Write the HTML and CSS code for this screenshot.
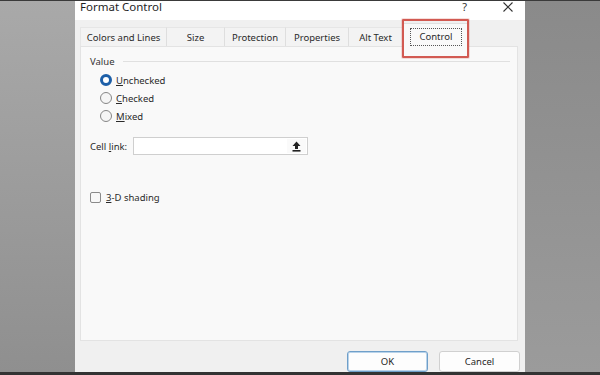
FILE: index.html
```html
<!DOCTYPE html>
<html lang="en">
<head>
<meta charset="utf-8">
<title>Format Control</title>
<link rel="stylesheet" href="styles.css">
</head>
<body>
<div class="screen">
  <div class="side side-left"></div>
  <div class="dialog">
    <div class="titlebar">
      <span class="title">Format Control</span>
      <span class="help">?</span>
      <svg class="close" width="10" height="10" viewBox="0 0 10 10"><path d="M0.5 0.5 L9.5 9.5 M9.5 0.5 L0.5 9.5" stroke="#333" stroke-width="1.1" fill="none"/></svg>
    </div>
    <div class="body">
      <div class="tabs">
        <div class="tab">Colors and Lines</div>
        <div class="tab">Size</div>
        <div class="tab">Protection</div>
        <div class="tab">Properties</div>
        <div class="tab">Alt Text</div>
        <div class="tab tab-active"><span class="focus">Control</span><span class="highlight"></span></div>
      </div>
      <div class="panel">
        <div class="group-head"><span class="group-label">Value</span><span class="group-line"></span></div>
        <div class="radios">
          <label class="radio-row"><span class="radio radio-on"></span><span><u>U</u>nchecked</span></label>
          <label class="radio-row"><span class="radio"></span><span><u>C</u>hecked</span></label>
          <label class="radio-row"><span class="radio"></span><span><u>M</u>ixed</span></label>
        </div>
        <div class="link-row">
          <span class="link-label">Cell <u>l</u>ink:</span>
          <div class="input">
            <span class="input-btn"><svg width="9" height="11" viewBox="0 0 9 11"><path d="M4.5 0.5 L8.5 5 H6 V8 H3 V5 H0.5 Z" fill="#222"/><rect x="0.5" y="9" width="8" height="1.6" fill="#222"/></svg></span>
          </div>
        </div>
        <label class="check-row"><span class="checkbox"></span><span><u>3</u>-D shading</span></label>
      </div>
      <div class="footer">
        <button class="btn btn-default">OK</button>
        <button class="btn">Cancel</button>
      </div>
    </div>
  </div>
  <div class="side side-right"></div>
</div>
</body>
</html>
```
FILE: styles.css
```css
* { box-sizing: border-box; }
html, body { margin: 0; padding: 0; }
body {
  width: 600px;
  height: 375px;
  overflow: hidden;
  background: #2e2e2e;
  font-family: "Segoe UI", "Noto Sans", "Open Sans", sans-serif;
  font-size: 9.5px;
  color: #2a2a2a;
}
.screen {
  display: flex;
  width: 600px;
  height: 375px;
  border-top: 1px solid #3a3a3a;
  border-bottom: 3px solid #333;
}
.side { width: 75px; flex: none; }
.side-left { background: linear-gradient(#a9a9a9, #8f8f8f); }
.side-right { background: linear-gradient(#8a8a8a, #9b9b9b); }
.dialog {
  width: 450px;
  flex: none;
  display: flex;
  flex-direction: column;
  background: #f0f0f0;
}
.titlebar {
  height: 19px;
  background: #fff;
  display: flex;
  align-items: flex-start;
  padding-left: 5px;
}
.title {
  font-size: 11.5px;
  line-height: 12px;
  color: #1f1f1f;
}
.help {
  margin-left: auto;
  font-size: 11px;
  line-height: 12px;
  color: #333;
}
.close { margin: 1px 12px 0 36px; }
.body {
  flex: 1;
  display: flex;
  flex-direction: column;
  padding: 0 7px 0 5px;
}
.tabs {
  display: grid;
  grid-template-columns: 87px 58px 61px 63px 54px 66px;
  height: 26px;
  align-items: end;
  position: relative;
}
.tab {
  height: 19px;
  display: flex;
  align-items: center;
  justify-content: center;
  border-top: 1px solid #e6e6e6;
  border-right: 1px solid #dedede;
  background: #f3f3f3;
  color: #2a2a2a;
}
.tab:first-child { border-left: 1px solid #e6e6e6; }
.tab-active {
  height: 24px;
  background: #f9f9f9;
  border: 1px solid #e0e0e0;
  border-bottom: none;
  margin-bottom: -1px;
  position: relative;
  z-index: 2;
  padding-top: 2px;
}
.focus {
  border: 1px dotted #555;
  padding: 2px 9px;
  line-height: 12px;
}
.highlight {
  position: absolute;
  left: -2px;
  right: -1px;
  top: -5px;
  height: 39px;
  border: 2px solid #d25a52;
  border-radius: 1px;
  box-shadow: 0 0 0 1px rgba(210,90,82,0.2);
}
.panel {
  height: 295px;
  background: #f9f9f9;
  border: 1px solid #e3e3e3;
  padding: 8px 7px 0 9px;
  position: relative;
  z-index: 1;
}
.group-head {
  display: flex;
  align-items: center;
  height: 12px;
}
.group-label { color: #333; }
.group-line {
  flex: 1;
  height: 1px;
  background: #e0e0e0;
  margin-left: 8px;
}
.radios {
  display: flex;
  flex-direction: column;
  gap: 6px;
  padding: 7px 0 0 10px;
}
.radio-row {
  display: flex;
  align-items: center;
  gap: 4px;
  height: 12px;
}
.radio {
  width: 12px;
  height: 12px;
  border-radius: 50%;
  border: 1px solid #868686;
  background: #f5f5f5;
  flex: none;
}
.radio-on {
  border: 3.5px solid #1d5fa8;
  background: #fff;
}
.link-row {
  display: flex;
  align-items: center;
  margin-top: 15px;
  height: 18px;
}
.link-label { width: 43px; color: #2a2a2a; }
.input {
  width: 175px;
  height: 18px;
  background: #fff;
  border: 1px solid #cfcfcf;
  display: flex;
  justify-content: flex-end;
  padding: 1px;
}
.input-btn {
  width: 19px;
  height: 14px;
  display: flex;
  align-items: center;
  justify-content: center;
  background: #fafafa;
}
.check-row {
  display: flex;
  align-items: center;
  gap: 5px;
  margin-top: 36px;
  height: 12px;
}
.checkbox {
  width: 11px;
  height: 11px;
  border: 1px solid #8a8a8a;
  border-radius: 2px;
  background: #f8f8f8;
  flex: none;
}
.footer {
  display: flex;
  justify-content: flex-end;
  gap: 11px;
  padding: 10px 0 0;
  margin-right: -2px;
}
.btn {
  width: 81px;
  height: 21px;
  font-family: inherit;
  font-size: 9.5px;
  color: #1f1f1f;
  background: #fdfdfd;
  border: 1px solid #d0d0d0;
  border-radius: 3px;
  padding: 0;
}
.btn-default {
  border: 1px solid #6f9fc9;
  box-shadow: inset 0 0 0 1px #b9d3ea;
}
```
